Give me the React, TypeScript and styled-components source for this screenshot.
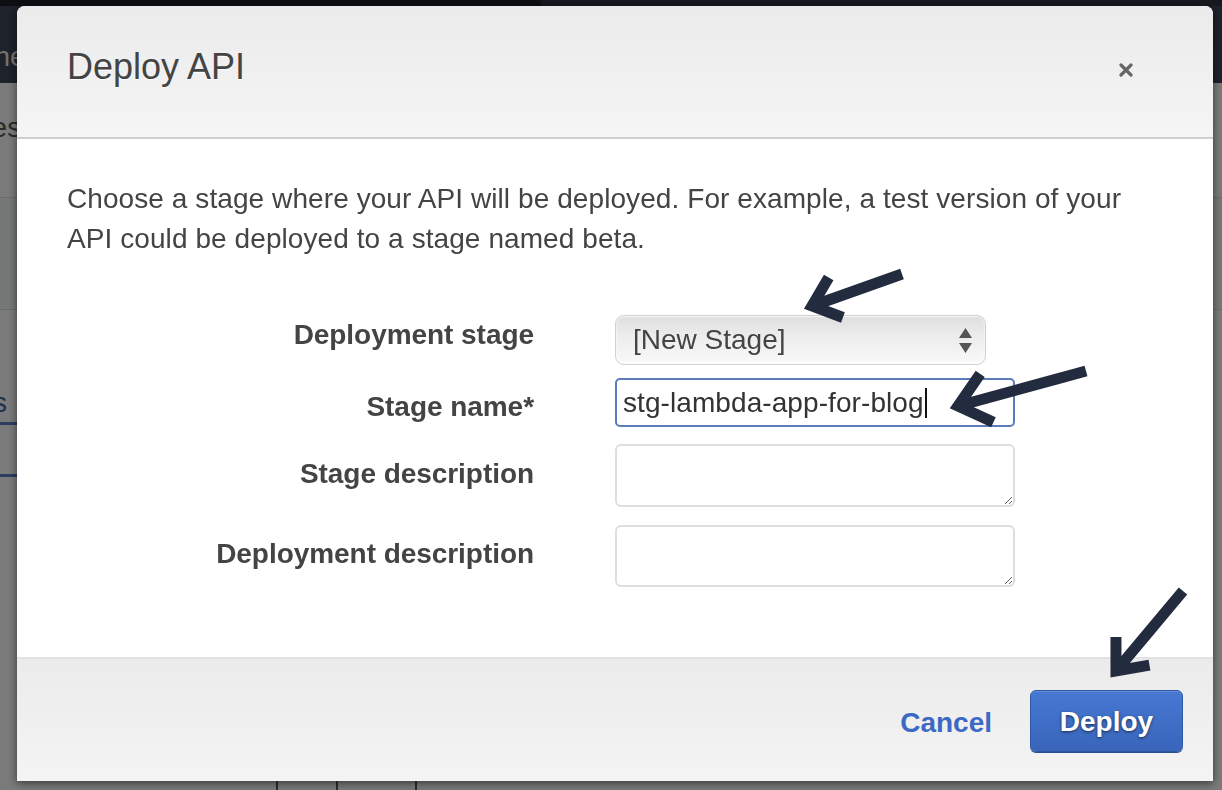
import React from 'react';
import styled, { createGlobalStyle } from 'styled-components';

// ── Global ───────────────────────────────────────────────────────────────────

const GlobalStyle = createGlobalStyle`
	html, body {
		margin: 0;
		padding: 0;
	}
	body {
		font-family: 'Liberation Sans', Arial, Helvetica, sans-serif;
		background: #f4f4f4;
		overflow: hidden;
	}
	* {
		box-sizing: border-box;
	}
`;

// ── Page behind the dialog ───────────────────────────────────────────────────

const Page = styled.div`
	width: 1222px;
	height: 790px;
	overflow: hidden;
	background: #f4f4f4;
	display: flex;
	flex-direction: column;
`;

const TopStrip = styled.div`
	height: 6px;
	background: linear-gradient(to right, #1a1e24 541px, #2c3440 541px);
`;

const TopNav = styled.header`
	height: 77px;
	background: #3a4556;
	display: flex;
	align-items: flex-start;
	padding-top: 34px;
	color: #e6e6e6;
	font-size: 28px;
	line-height: 34px;
`;

const NavTitle = styled.span`
	margin-left: -74px;
`;

const SubHeader = styled.div`
	height: 115px;
	border-bottom: 1px solid #d2d6d8;
	display: flex;
	align-items: flex-start;
	padding-top: 29px;
	font-size: 28px;
	color: #555;
`;

const SubTitle = styled.span`
	margin-left: -66px;
`;

const ToolBand = styled.div`
	height: 112px;
	background: #eceeee;
	border-bottom: 1px solid #d2d6d8;
`;

const TabRow = styled.div`
	height: 115px;
	display: flex;
	align-items: flex-end;
`;

const Tab = styled.div`
	margin-left: -100px;
	width: 200px;
	padding: 0 93px 2px 0;
	text-align: right;
	font-size: 28px;
	line-height: 34px;
	color: #3e5e9f;
	border-bottom: 3px solid #5b7bbd;
`;

const ListRow = styled.div`
	height: 52px;
	width: 110px;
	border-bottom: 3px solid #5b7bbd;
`;

const TableFoot = styled.div`
	margin-top: auto;
	height: 14px;
	display: flex;
`;

const FootCell = styled.div<{ $w: number }>`
	width: ${({ $w }) => $w}px;
	border-right: 2px solid #5a5a5a;
`;

// ── Dialog ───────────────────────────────────────────────────────────────────

const Overlay = styled.div`
	position: fixed;
	inset: 0;
	background: rgba(0, 0, 0, 0.5);
	padding: 6px 9px 9px 17px;
	display: flex;
	flex-direction: column;
`;

const Modal = styled.div`
	flex: 1;
	display: flex;
	flex-direction: column;
	background: #fff;
	border-radius: 8px 8px 0 0;
	box-shadow: 0 2px 9px rgba(0, 0, 0, 0.55);
	overflow: hidden;
`;

const Header = styled.div`
	height: 133px;
	flex-shrink: 0;
	padding: 39px 80px 0 50px;
	display: flex;
	justify-content: space-between;
	align-items: flex-start;
	background: linear-gradient(to bottom, #ebebeb, #f5f5f5);
	border-bottom: 2px solid #cfcfcf;
`;

const Title = styled.h2`
	margin: 0;
	font-size: 36px;
	line-height: 44px;
	font-weight: normal;
	color: #444;
	text-shadow: 0 1px 0 #fff;
`;

const CloseButton = styled.button`
	margin-top: 18px;
	width: 14px;
	height: 14px;
	padding: 0;
	border: none;
	background: none;
	display: flex;
	cursor: pointer;
`;

const Body = styled.div`
	flex: 1;
	padding: 40px 50px 70px;
`;

const Intro = styled.p`
	margin: 0;
	font-size: 28px;
	line-height: 40px;
	letter-spacing: 0.08px;
	color: #444;
`;

const Form = styled.div`
	margin-top: 56px;
	display: grid;
	grid-template-columns: 467px 400px;
	grid-template-rows: 63px 66px 81px 62px;
	column-gap: 81px;
`;

const Label = styled.label<{ $top: number }>`
	text-align: right;
	font-weight: bold;
	font-size: 28px;
	line-height: 34px;
	letter-spacing: -0.05px;
	color: #444;
	padding-top: ${({ $top }) => $top}px;
`;

const SelectBox = styled.div`
	width: 371px;
	height: 50px;
	border: 1px solid #d0d0d0;
	border-radius: 9px;
	background: linear-gradient(to bottom, #dedede 0%, #ececec 40%, #f9f9f9 100%);
	box-shadow: inset 0 1px 1px rgba(255, 255, 255, 0.8), inset 0 -2px 3px rgba(255, 255, 255, 0.9);
	display: flex;
	align-items: center;
	justify-content: space-between;
	padding: 0 13px 0 17px;
	font-size: 28px;
	color: #444;
`;

const TextBox = styled.div`
	width: 400px;
	height: 49px;
	border: 2px solid #5b7cb8;
	border-radius: 5px;
	display: flex;
	align-items: center;
	padding-left: 6px;
	font-size: 28px;
	letter-spacing: 0.08px;
	color: #333;
`;

const Caret = styled.span`
	display: inline-block;
	width: 2px;
	height: 30px;
	margin-left: 1px;
	background: #111;
`;

const TextArea = styled.textarea<{ $h: number }>`
	width: 400px;
	height: ${({ $h }) => $h}px;
	border: 2px solid #dedede;
	border-radius: 6px;
	font-family: inherit;
	font-size: 20px;
	outline: none;
	resize: both;
`;

const Footer = styled.div`
	flex-shrink: 0;
	border-top: 2px solid #e2e2e2;
	background: linear-gradient(to bottom, #ebebeb, #f4f4f4);
	padding: 31px 30px 29px;
	display: flex;
	justify-content: flex-end;
	align-items: center;
	gap: 38px;
`;

const CancelLink = styled.button`
	border: none;
	background: none;
	padding: 3px 0 0;
	font-family: inherit;
	font-weight: bold;
	font-size: 28px;
	color: #3b69c3;
	cursor: pointer;
`;

const DeployButton = styled.button`
	width: 153px;
	height: 62px;
	padding-top: 3px;
	border: 1px solid #2d59a7;
	border-radius: 6px;
	background: linear-gradient(to bottom, #4678d2, #3965bb);
	box-shadow: inset 0 1px 0 rgba(255, 255, 255, 0.15), 0 1px 0 #2a4f92;
	font-family: inherit;
	font-weight: bold;
	font-size: 28px;
	color: #fff;
	text-shadow: 0 1px 3px rgba(0, 0, 0, 0.6);
	cursor: pointer;
`;

// ── Annotation arrows ────────────────────────────────────────────────────────

const Annotations = styled.svg`
	position: fixed;
	inset: 0;
	pointer-events: none;
`;

type Pt = [number, number];

const arrows: { tail: Pt; tip: Pt; len: number }[] = [
	{ tail: [902, 274], tip: [812, 306], len: 33 },
	{ tail: [1086, 371], tip: [958, 406], len: 39 },
	{ tail: [1183, 591], tip: [1116, 671], len: 34 },
];

function Arrow({ tail, tip, len }: { tail: Pt; tip: Pt; len: number }) {
	const back = Math.atan2(tail[1] - tip[1], tail[0] - tip[0]);
	const spread = (40 * Math.PI) / 180;
	const arm = (a: number) => `${tip[0] + len * Math.cos(a)},${tip[1] + len * Math.sin(a)}`;
	return (
		<g stroke="#232c3f" strokeWidth={11} fill="none" strokeLinejoin="miter">
			<line x1={tail[0]} y1={tail[1]} x2={tip[0]} y2={tip[1]} />
			<polyline points={`${arm(back - spread)} ${tip[0]},${tip[1]} ${arm(back + spread)}`} />
		</g>
	);
}

// ─────────────────────────────────────────────────────────────────────────────

export default function App() {
	return (
		<>
			<GlobalStyle />
			<Page>
				<TopStrip />
				<TopNav>
					<NavTitle>Pipeline</NavTitle>
				</TopNav>
				<SubHeader>
					<SubTitle>Stages</SubTitle>
				</SubHeader>
				<ToolBand />
				<TabRow>
					<Tab>Stages</Tab>
				</TabRow>
				<ListRow />
				<TableFoot>
					<FootCell $w={278} />
					<FootCell $w={60} />
					<FootCell $w={79} />
				</TableFoot>
			</Page>

			<Overlay>
				<Modal>
					<Header>
						<Title>Deploy API</Title>
						<CloseButton aria-label="Close">
							<svg width="14" height="14" viewBox="0 0 14 14">
								<path d="M2 2 L12 12 M12 2 L2 12" stroke="#666" strokeWidth="3.2" strokeLinecap="round" />
							</svg>
						</CloseButton>
					</Header>

					<Body>
						<Intro>
							Choose a stage where your API will be deployed. For example, a test version of your
							API could be deployed to a stage named beta.
						</Intro>

						<Form>
							<Label $top={3}>Deployment stage</Label>
							<SelectBox>
								<span>[New Stage]</span>
								<svg width="13" height="25" viewBox="0 0 13 25">
									<path d="M6.5 0 L13 10 L0 10 Z M6.5 25 L13 15 L0 15 Z" fill="#555" />
								</svg>
							</SelectBox>

							<Label $top={12}>Stage name*</Label>
							<TextBox>
								stg-lambda-app-for-blog
								<Caret />
							</TextBox>

							<Label $top={13}>Stage description</Label>
							<TextArea $h={63} />

							<Label $top={12}>Deployment description</Label>
							<TextArea $h={62} />
						</Form>
					</Body>

					<Footer>
						<CancelLink>Cancel</CancelLink>
						<DeployButton>Deploy</DeployButton>
					</Footer>
				</Modal>
			</Overlay>

			<Annotations width="1222" height="790" viewBox="0 0 1222 790">
				{arrows.map((a, i) => (
					<Arrow key={i} {...a} />
				))}
			</Annotations>
		</>
	);
}
